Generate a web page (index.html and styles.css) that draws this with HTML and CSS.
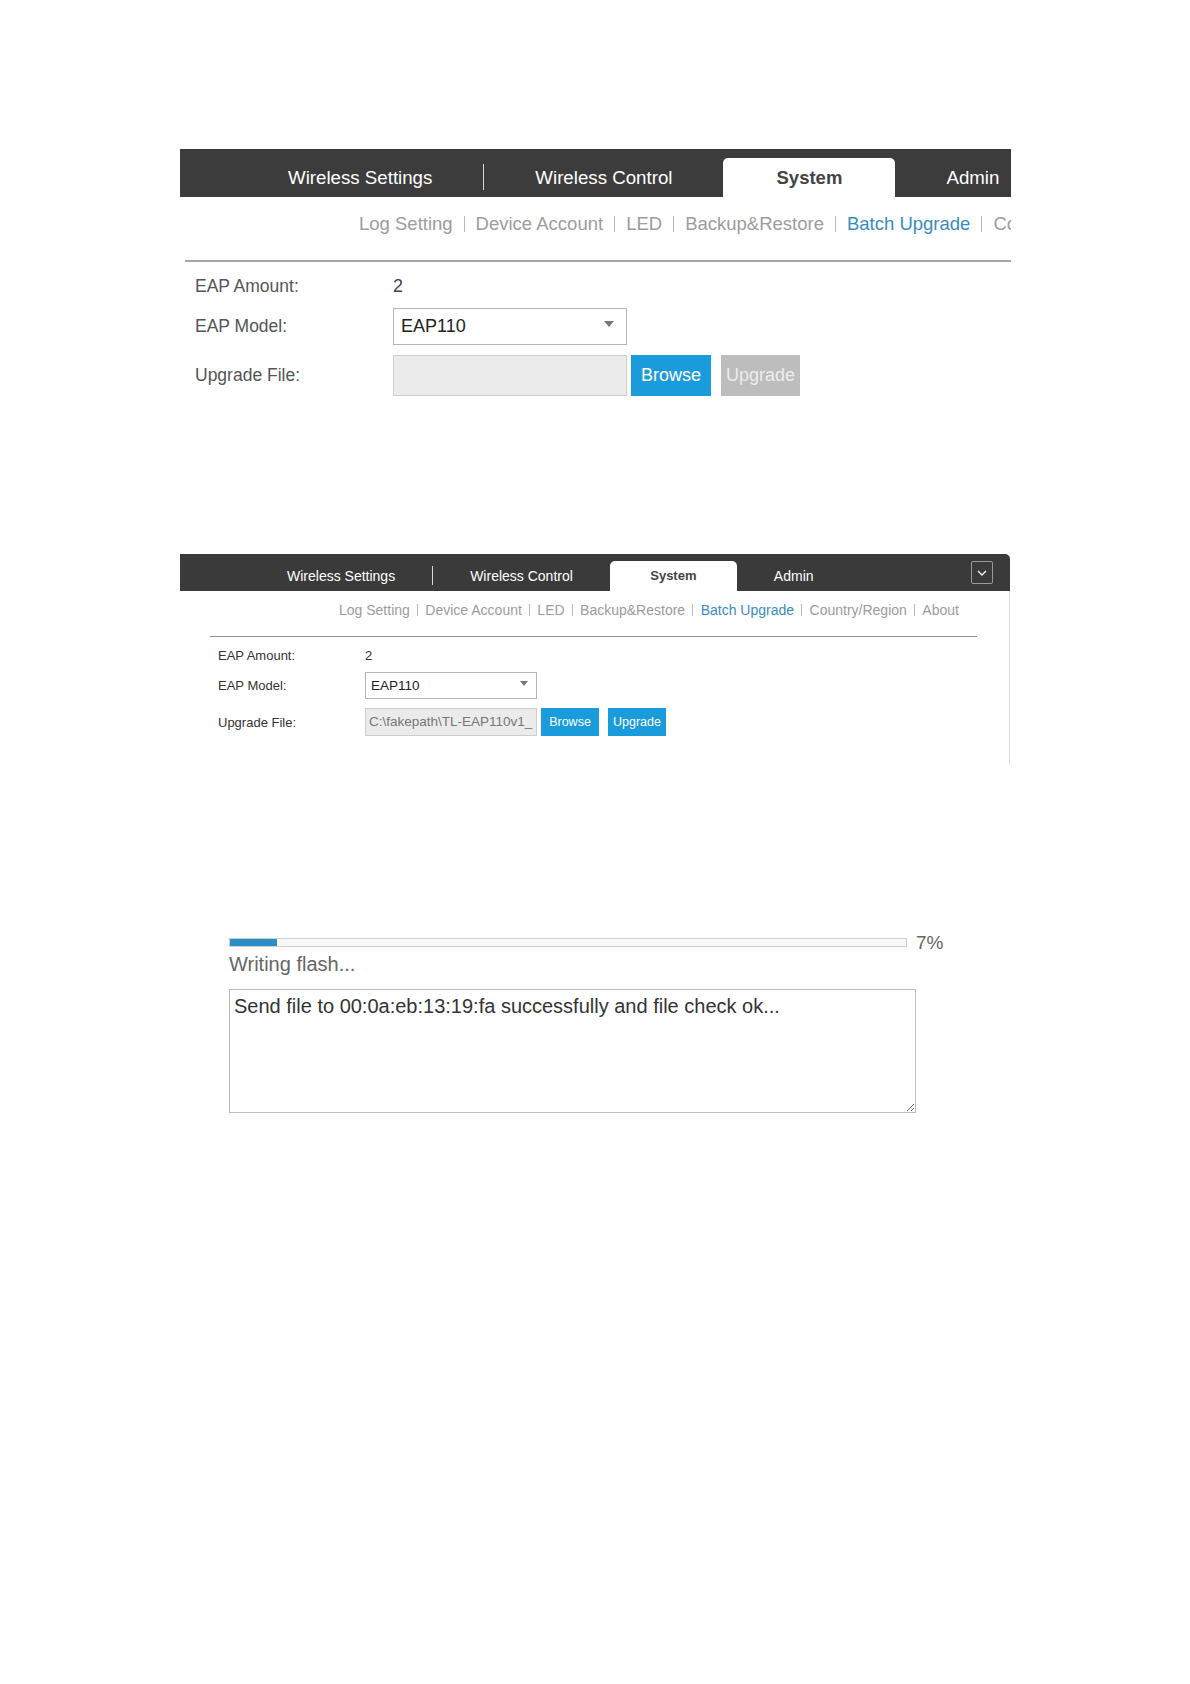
FILE: index.html
```html
<!DOCTYPE html>
<html lang="en">
<head>
  <meta charset="UTF-8">
  <title>Batch Upgrade</title>
  <link rel="stylesheet" href="styles.css">
</head>
<body>
  <div class="page">

    <!-- large capture -->
    <section class="shot shot-a">
      <div class="topbar">
        <span class="tab">Wireless Settings</span>
        <span class="bar-sep"></span>
        <span class="tab">Wireless Control</span>
        <span class="tab active">System</span>
        <span class="tab">Admin</span>
      </div>
      <div class="subnav">
        <span>Log Setting</span><i></i>
        <span>Device Account</span><i></i>
        <span>LED</span><i></i>
        <span>Backup&amp;Restore</span><i></i>
        <span class="current">Batch Upgrade</span><i></i>
        <span>Country/Region</span><i></i>
        <span>About</span>
      </div>
      <div class="rule"></div>
      <div class="form">
        <label>EAP Amount:</label>
        <span class="value">2</span>
        <label>EAP Model:</label>
        <div class="select"><span>EAP110</span><b class="caret"></b></div>
        <label>Upgrade File:</label>
        <div class="file-row">
          <div class="file-input"></div>
          <button class="btn browse">Browse</button>
          <button class="btn upgrade disabled">Upgrade</button>
        </div>
      </div>
    </section>

    <!-- small capture -->
    <section class="shot shot-b">
      <div class="topbar">
        <span class="tab">Wireless Settings</span>
        <span class="bar-sep"></span>
        <span class="tab">Wireless Control</span>
        <span class="tab active">System</span>
        <span class="tab">Admin</span>
        <span class="menu-btn">
          <svg width="12" height="8" viewBox="0 0 12 8"><polyline points="2,2 6,6 10,2" fill="none" stroke="#fff" stroke-width="1.3"/></svg>
        </span>
      </div>
      <div class="panel">
        <div class="subnav">
          <span>Log Setting</span><i></i>
          <span>Device Account</span><i></i>
          <span>LED</span><i></i>
          <span>Backup&amp;Restore</span><i></i>
          <span class="current">Batch Upgrade</span><i></i>
          <span>Country/Region</span><i></i>
          <span>About</span>
        </div>
        <div class="rule"></div>
        <div class="form">
          <label>EAP Amount:</label>
          <span class="value">2</span>
          <label>EAP Model:</label>
          <div class="select"><span>EAP110</span><b class="caret"></b></div>
          <label>Upgrade File:</label>
          <div class="file-row">
            <div class="file-input">C:\fakepath\TL-EAP110v1_</div>
            <button class="btn browse">Browse</button>
            <button class="btn upgrade">Upgrade</button>
          </div>
        </div>
      </div>
    </section>

    <!-- progress capture -->
    <section class="progress-box">
      <div class="progress-row">
        <div class="progress"><div class="fill" style="width:7%"></div></div>
        <span class="pct">7%</span>
      </div>
      <div class="status">Writing flash...</div>
      <textarea class="log" readonly>Send file to 00:0a:eb:13:19:fa successfully and file check ok...</textarea>
    </section>

  </div>
</body>
</html>
```

FILE: styles.css
```css
body {
  margin: 0;
  background: #fff;
  font-family: "Liberation Sans", Arial, sans-serif;
}
.page {
  padding: 149px 0 0 180px;
}
.shot {
  overflow: hidden;
}
.topbar {
  display: flex;
  align-items: flex-end;
  background: #3c3c3c;
}
.tab {
  color: #fff;
  white-space: nowrap;
  flex-shrink: 0;
}
.tab.active {
  background: #fff;
  color: #444;
  font-weight: bold;
  text-align: center;
  border-radius: 5px 5px 0 0;
}
.bar-sep {
  width: 1px;
  background: #d8d8d8;
  flex-shrink: 0;
}
.subnav {
  display: flex;
  align-items: center;
  white-space: nowrap;
  color: #9c9c9c;
}
.subnav span {
  flex-shrink: 0;
}
.subnav .current {
  color: #3a8cc0;
}
.subnav i {
  width: 1px;
  background: #bbb;
  flex-shrink: 0;
}
.form {
  display: grid;
  align-items: center;
}
.form label {
  color: #555;
}
.value {
  color: #444;
}
.select {
  display: flex;
  align-items: center;
  justify-content: space-between;
  box-sizing: border-box;
  border: 1px solid #b5b5b5;
  background: #fff;
  color: #222;
}
.caret {
  width: 0;
  height: 0;
  border-left: 5px solid transparent;
  border-right: 5px solid transparent;
  border-top: 6px solid #777;
}
.file-row {
  display: flex;
}
.file-input {
  box-sizing: border-box;
  background: #ebebeb;
  border: 1px solid #cdcdcd;
  color: #777;
  white-space: nowrap;
  overflow: hidden;
}
.btn {
  border: none;
  padding: 0;
  background: #1a9cdc;
  color: #fff;
  font-family: "Liberation Sans", Arial, sans-serif;
}
.btn.disabled {
  background: #bdbdbd;
  color: #ececec;
}

/* large capture */
.shot-a {
  width: 831px;
}
.shot-a .topbar {
  height: 48px;
  gap: 51px;
  padding-left: 108px;
}
.shot-a .tab {
  height: 39px;
  line-height: 39px;
  font-size: 18.7px;
}
.shot-a .tab.active {
  width: 172px;
  font-size: 18.5px;
}
.shot-a .bar-sep {
  height: 26px;
  margin-bottom: 7px;
}
.shot-a .subnav {
  margin-top: 14px;
  height: 26px;
  padding-left: 179px;
  font-size: 18.5px;
}
.shot-a .subnav i {
  height: 16px;
  margin: 0 11px;
}
.shot-a .rule {
  margin: 23px 0 0 5px;
  border-top: 2px solid #a8a8a8;
}
.shot-a .form {
  margin-top: 13px;
  padding-left: 15px;
  grid-template-columns: 198px auto;
  grid-template-rows: 23px 37px 41px;
  row-gap: 10px;
}
.shot-a .form label {
  font-size: 17.5px;
}
.shot-a .value {
  font-size: 18px;
}
.shot-a .select {
  width: 234px;
  height: 37px;
  padding: 0 12px 0 7px;
  font-size: 18px;
}
.shot-a .caret {
  transform: translateY(-3px);
}
.shot-a .file-input {
  width: 234px;
  height: 41px;
}
.shot-a .btn {
  height: 41px;
  font-size: 18px;
}
.shot-a .browse {
  width: 80px;
  margin-left: 4px;
}
.shot-a .upgrade {
  width: 79px;
  margin-left: 10px;
}

/* small capture */
.shot-b {
  width: 830px;
  margin-top: 158px;
}
.shot-b .topbar {
  height: 37px;
  gap: 37px;
  padding-left: 107px;
  border-radius: 0 5px 0 0;
  background: #3a3a3a;
}
.shot-b .tab {
  height: 30px;
  line-height: 30px;
  font-size: 14px;
}
.shot-b .tab.active {
  width: 127px;
  font-size: 13px;
}
.shot-b .bar-sep {
  height: 19px;
  margin-bottom: 6px;
}
.menu-btn {
  margin: 0 17px 0 auto;
  align-self: center;
  width: 22px;
  height: 23px;
  box-sizing: border-box;
  border: 1px solid #999;
  border-radius: 2px;
  display: flex;
  align-items: center;
  justify-content: center;
}
.panel {
  height: 174px;
  box-sizing: border-box;
  border-right: 1px solid #dcdcdc;
}
.shot-b .subnav {
  padding: 9px 0 0 159px;
  height: 20px;
  font-size: 14px;
}
.shot-b .subnav i {
  height: 12px;
  margin: 0 7.5px 0 7px;
}
.shot-b .rule {
  margin: 16px 32px 0 30px;
  border-top: 1px solid #939393;
}
.shot-b .form {
  margin-top: 8px;
  padding-left: 38px;
  grid-template-columns: 147px auto;
  grid-template-rows: 20px 27px 32px;
  row-gap: 7px;
}
.shot-b .form label {
  font-size: 13px;
  color: #333;
}
.shot-b .value {
  font-size: 13px;
  color: #333;
}
.shot-b .select {
  width: 172px;
  height: 27px;
  padding: 0 8px 0 5px;
  font-size: 13.5px;
}
.shot-b .caret {
  border-left-width: 4px;
  border-right-width: 4px;
  border-top-width: 5px;
  transform: translateY(-2px);
}
.shot-b .file-input {
  width: 172px;
  height: 28px;
  line-height: 26px;
  padding-left: 3px;
  font-size: 13.5px;
}
.shot-b .btn {
  width: 58px;
  height: 28px;
  font-size: 12.5px;
}
.shot-b .browse {
  margin-left: 4px;
}
.shot-b .upgrade {
  margin-left: 9px;
}

/* progress capture */
.progress-box {
  margin: 173px 0 0 49px;
}
.progress-row {
  display: flex;
  align-items: center;
  height: 9px;
}
.progress {
  width: 678px;
  height: 9px;
  box-sizing: border-box;
  border: 1px solid #cfcfcf;
  background: #f8f8f8;
}
.fill {
  height: 100%;
  background: #2a8ec6;
}
.pct {
  margin-left: 9px;
  line-height: 9px;
  font-size: 19px;
  color: #666;
}
.status {
  margin-top: 5px;
  font-size: 20px;
  line-height: 24px;
  color: #666;
}
.log {
  display: block;
  margin-top: 13px;
  width: 687px;
  height: 124px;
  box-sizing: border-box;
  border: 1px solid #bdbdbd;
  padding: 4px 4px 2px;
  font-family: "Liberation Sans", Arial, sans-serif;
  font-size: 20px;
  line-height: 24px;
  color: #333;
  background: #fff;
}
```
